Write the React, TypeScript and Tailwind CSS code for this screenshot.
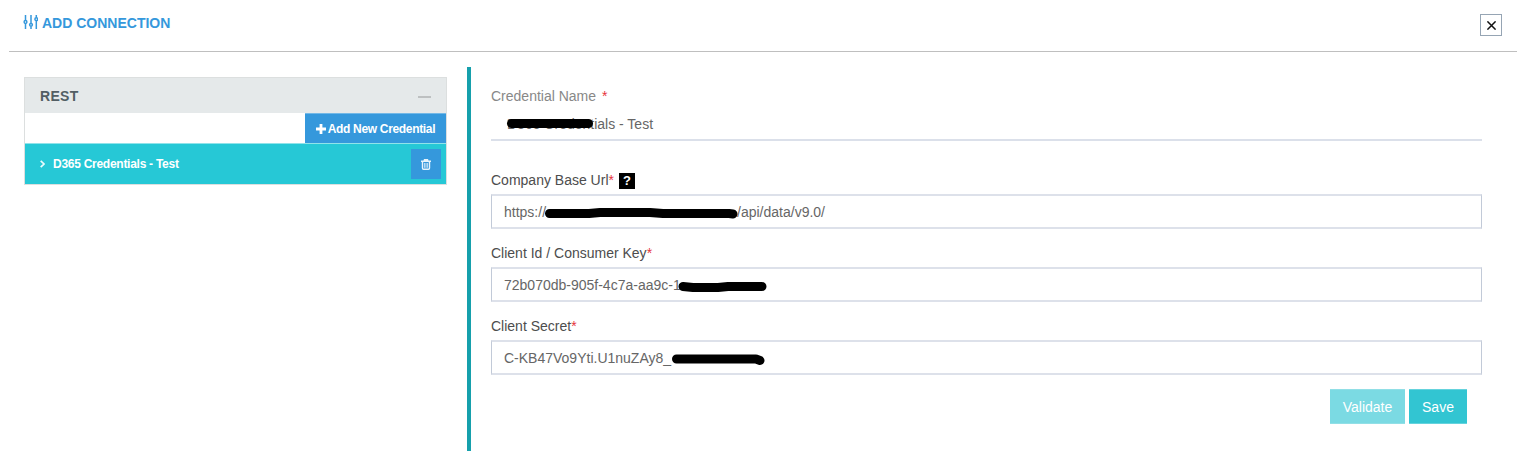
import React from "react";

type FieldProps = {
  label: string;
  value: React.ReactNode;
  help?: boolean;
};

function Required() {
  return <span className="text-[#e7343c]">*</span>;
}

function Stroke({ d, className, thickness = 9 }: { d: string; className: string; thickness?: number }) {
  return (
    <svg className={`pointer-events-none absolute overflow-visible ${className}`} width="200" height="16" fill="none">
      <path d={d} stroke="#000" strokeWidth={thickness} strokeLinecap="round" strokeLinejoin="round" />
    </svg>
  );
}

function Field({ label, value, help }: FieldProps) {
  return (
    <div className="h-[73px]">
      <label className="flex h-6 items-center text-sm text-[#4d4d4d]">
        {label}
        <Required />
        {help && (
          <span className="mt-px ml-[5px] flex h-4 w-4 items-center justify-center bg-black pt-px text-[13px] leading-4 font-bold text-white">
            ?
          </span>
        )}
      </label>
      <div className="relative mt-0.5 flex h-[35px] items-center border-x border-y-2 border-x-[#c2cad8] border-y-[#dde1ea] px-3 text-sm text-[#666]">
        {value}
      </div>
    </div>
  );
}

function SlidersIcon() {
  return (
    <svg width="15" height="15" viewBox="0 0 15 15" fill="none" stroke="#3598dc" strokeWidth="1.5">
      <path d="M2.5 0v5.5M2.5 8.5v5.5M8 0v8M8 11.4v2.6M13.3 0v2.6M13.3 5.8v8.2" />
      <circle cx="2.5" cy="7" r="1.4" />
      <circle cx="8" cy="9.8" r="1.4" />
      <circle cx="13.3" cy="4.2" r="1.4" />
    </svg>
  );
}

function TrashIcon() {
  return (
    <svg width="10" height="11" viewBox="0 0 10 11" fill="none" stroke="#e8f4fc" strokeWidth="1.4">
      <path d="M0 2.3h10M3 2.2l.5-1.5h3l.5 1.5M1.5 2.5v6.6q0 1.2 1 1.2h5q1 0 1-1.2V2.5" />
      <path d="M3.6 4v4.8M5 4v4.8M6.4 4v4.8" strokeWidth=".8" />
    </svg>
  );
}

export default function App() {
  return (
    <div className="h-[451px] w-[1520px] overflow-hidden bg-white font-['Liberation_Sans',Arial,sans-serif]">
      <header className="ml-[9px] flex h-[52px] w-[1508px] justify-between border-b border-[#bfbfbf] pr-[15px] pl-[14px]">
        <h1 className="flex h-[46px] items-center gap-1 text-sm font-bold text-[#3598dc]">
          <span className="-mt-0.5">
            <SlidersIcon />
          </span>
          ADD CONNECTION
        </h1>
        <button className="mt-3.5 flex h-[22px] w-[22px] items-center justify-center border border-[#96a5b4] pt-px pl-px" aria-label="Close">
          <svg width="9" height="9" viewBox="0 0 9 9" stroke="#111" strokeWidth="1.5">
            <path d="M.4.4l8.2 8.2M8.6.4L.4 8.6" />
          </svg>
        </button>
      </header>

      <main className="flex h-[399px] pl-6">
        <aside className="mt-[25px] h-[108px] w-[423px] border border-[#dcdfdf] bg-white">
          <div className="flex h-[35px] items-center justify-between bg-[#e5e9ea] pr-[15px] pl-[15px]">
            <h2 className="text-sm font-bold tracking-[0.3px] text-[#525e64]">REST</h2>
            <span className="mt-0.5 h-0.5 w-[13px] bg-[#bdc0c1]" />
          </div>
          <div className="flex h-[30px] justify-end">
            <button className="flex h-[30px] w-[141px] items-center justify-center gap-0.5 border-t border-[#72b8e7] bg-[#3598dc] text-xs font-bold tracking-[-0.33px] text-white">
              <svg width="10" height="10" viewBox="0 0 10 10" stroke="#fff" strokeWidth="2.8">
                <path d="M5 0v10M0 5h10" />
              </svg>
              Add New Credential
            </button>
          </div>
          <div className="flex h-[41px] items-center border-t border-[#90e3ea] bg-[#26c8d6] pr-[5px] pl-[15px] text-xs font-bold text-white">
            <svg width="5" height="8" viewBox="0 0 5 8" fill="none" stroke="#e9fbfc" strokeWidth="1.7">
              <path d="M.7.8L4 4 .7 7.2" />
            </svg>
            <span className="ml-2 tracking-[-0.27px]">D365 Credentials - Test</span>
            <button className="ml-auto flex h-[30px] w-[30px] items-center justify-center bg-[#3598dc]" aria-label="Delete">
              <TrashIcon />
            </button>
          </div>
        </aside>

        <section className="mt-[15px] ml-5 flex h-96 border-l-4 border-[#16a0ac] pl-5">
          <form className="w-[991px] pt-[17px]" onSubmit={(e) => e.preventDefault()}>
            <label className="flex h-6 items-center gap-1.5 text-sm text-[#888]">
              Credential Name <Required />
            </label>
            <div className="relative flex h-[33px] items-center border-b-2 border-[#dbe0ea] pl-4 text-sm text-[#666]">
              D365 Credentials - Test
              <Stroke className="top-[11px] left-4" d="M4.5 4.5h77" />
            </div>
            <div className="pt-[27px]">
              <Field
                label="Company Base Url"
                help
                value={
                  <>
                    <span>https://</span>
                    <span className="ml-[191px]">/api/data/v9.0/</span>
                    <Stroke className="top-[13px] left-[53px]" d="M4.5 4.5L44 4.5L55 3.5L105 3.5L118 4.5L184 4.5L188 5" />
                  </>
                }
              />
              <Field
                label="Client Id / Consumer Key"
                value={
                  <>
                    72b070db-905f-4c7a-aa9c-1
                    <Stroke className="top-[13px] left-[186px]" d="M5 4.5L15 5.5L40 5.5L50 4.5L84 4.5" />
                  </>
                }
              />
              <Field
                label="Client Secret"
                value={
                  <>
                    C-KB47Vo9Yti.U1nuZAy8_
                    <Stroke className="top-[13px] left-[180px]" d="M4.5 4L84 4L88 5.5" />
                  </>
                }
              />
            </div>
            <div className="mt-0.5 flex justify-end gap-1 pr-[15px]">
              <button className="h-[35px] w-[75px] border-y border-[#91dfe6] bg-[#7bdae3] text-sm text-white">Validate</button>
              <button className="h-[35px] w-[58px] border-y border-[#65d3dd] bg-[#32c5d2] text-sm text-white">Save</button>
            </div>
          </form>
        </section>
      </main>
    </div>
  );
}
